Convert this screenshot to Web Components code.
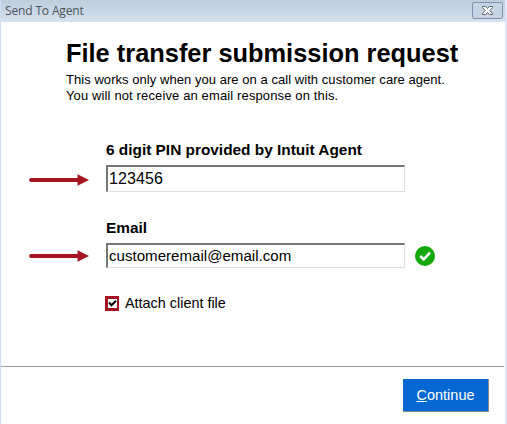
<!DOCTYPE html>
<html lang="en">
<head>
<meta charset="utf-8">
<title>Send To Agent</title>
<style>
  body {
    margin: 0;
    font-family: "Liberation Sans", Arial, sans-serif;
    color: #000;
  }

  .second {
    letter-spacing: 0.13px;
  }
</style>
</head>
<body>
<dialog-window caption="Send To Agent">
  <page-heading>
    File transfer submission request
    <span slot="note">This works only when you are on a call with customer care agent.</span>
    <span slot="note" class="second">You will not receive an email response on this.</span>
  </page-heading>
  <form-field class="pin" label="6 digit PIN provided by Intuit Agent" value="123456"></form-field>
  <form-field class="email" label="Email" value="customeremail@email.com">
    <valid-mark slot="status"></valid-mark>
  </form-field>
  <check-option>Attach client file</check-option>
  <push-button slot="footer"><u>C</u>ontinue</push-button>
</dialog-window>

<script>
class BaseElement extends HTMLElement {
  constructor() {
    super();
    this.attachShadow({ mode: "open" });
  }

  connectedCallback() {
    this.shadowRoot.innerHTML = /* html */`
    <style>${this.constructor.styles}</style>
    ${this.render()}`;
  }
}

class DialogWindow extends BaseElement {
  static get styles() {
    return /* css */`
      :host {
        display: flex;
        flex-direction: column;
        box-sizing: border-box;
        width: 507px;
        height: 424px;
        border-left: 1px solid #cfdff4;
        border-right: 2px solid #dfe6f7;
        background: #fefefe;
        overflow: hidden;
      }

      header {
        display: flex;
        justify-content: space-between;
        align-items: flex-start;
        box-sizing: border-box;
        height: 22px;
        margin: 0 -2px 0 -1px;
        padding: 2px 4px 0 5px;
        background: linear-gradient(#c0cedc, #c9d7e5 50%, #d5e2f0);
        color: #4b535c;
        font: 12px/18px "Open Sans", "Noto Sans", sans-serif;
        letter-spacing: -0.15px;
      }

      svg {
        display: block;
      }

      main {
        flex: 1;
      }

      footer {
        display: flex;
        justify-content: flex-end;
        box-sizing: border-box;
        height: 58px;
        margin-right: 1px;
        padding: 12px 15px 0 0;
        border-top: 1px solid #999;
      }
    `;
  }

  render() {
    return /* html */`
    <header>
      <span>${this.getAttribute("caption")}</span>
      <svg width="31" height="17" viewBox="0 0 31 17">
        <rect x=".5" y=".5" width="30" height="16" rx="1.5" fill="#c7d4e3" stroke="#8390ad"/>
        <path d="M10.5 4.5h3.2l1.8 2 1.8-2h3.2v1.2l-2.7 2.8 2.7 2.8v1.2h-3.2l-1.8-2-1.8 2h-3.2v-1.2l2.7-2.8-2.7-2.8z" fill="#fff" stroke="#5b6270"/>
      </svg>
    </header>
    <main><slot></slot></main>
    <footer><slot name="footer"></slot></footer>`;
  }
}

class PageHeading extends BaseElement {
  static get styles() {
    return /* css */`
      :host {
        display: block;
        height: 119px;
        padding: 15px 0 0 65px;
        box-sizing: border-box;
      }

      h1 {
        margin: 0;
        font-size: 25.4px;
        line-height: 32px;
        white-space: nowrap;
      }

      p {
        display: flex;
        flex-direction: column;
        margin: 3px 0 0;
        font-size: 13px;
        line-height: 16px;
        letter-spacing: 0.05px;
      }
    `;
  }

  render() {
    return /* html */`
    <h1><slot></slot></h1>
    <p><slot name="note"></slot></p>`;
  }
}

class PointerArrow extends BaseElement {
  static get styles() {
    return /* css */`
      :host { display: block; }
      svg { display: block; }
    `;
  }

  render() {
    return /* html */`
    <svg width="61" height="12" viewBox="0 0 61 12">
      <path d="M3 6h48" stroke="#a31621" stroke-width="3.8" stroke-linecap="round"/>
      <path d="M49.5 .2L61 6 49.5 11.8z" fill="#a31621"/>
    </svg>`;
  }
}

class FormField extends BaseElement {
  static get styles() {
    return /* css */`
      :host {
        display: grid;
        grid-template-columns: 61px 299px 20px;
        column-gap: 17px;
        align-items: center;
        align-content: start;
        padding-left: 27px;
        --box-height: 27px;
      }

      :host(.pin) {
        height: 78px;
      }

      :host(.email) {
        --box-height: 25px;
        height: 74px;
      }

      label {
        grid-column: 2 / 4;
        height: 24px;
        font-size: 15.4px;
        font-weight: bold;
        line-height: 18px;
        white-space: nowrap;
      }

      pointer-arrow {
        grid-column: 1;
      }

      :host(.pin) pointer-arrow {
        padding-top: 2px;
      }

      .box {
        box-sizing: border-box;
        height: var(--box-height);
        padding-left: 1px;
        border: solid;
        border-width: 2px 1px 1px 2px;
        border-color: #777 #ddd #ddd #777;
        background: #fff;
        font-size: 15.1px;
        line-height: calc(var(--box-height) - 3px);
      }

      :host(.pin) .box {
        font-size: 16px;
        letter-spacing: 0.1px;
      }

      ::slotted(*) {
        margin-left: -7px;
      }
    `;
  }

  render() {
    return /* html */`
    <label>${this.getAttribute("label")}</label>
    <pointer-arrow></pointer-arrow>
    <div class="box">${this.getAttribute("value")}</div>
    <slot name="status"></slot>`;
  }
}

class ValidMark extends BaseElement {
  static get styles() {
    return /* css */`
      :host { display: block; }
      svg { display: block; }
    `;
  }

  render() {
    return /* html */`
    <svg width="20" height="20" viewBox="0 0 20 20">
      <circle cx="10" cy="10" r="10" fill="#13a80b"/>
      <path d="M5.2 10l3.5 3.4 6.3-6.8" fill="none" stroke="#fff" stroke-width="2.5"/>
    </svg>`;
  }
}

class CheckOption extends BaseElement {
  static get styles() {
    return /* css */`
      :host {
        display: flex;
        align-items: center;
        gap: 6px;
        padding-left: 104px;
        font-size: 14.4px;
        line-height: 20px;
      }
      svg { display: block; }
    `;
  }

  render() {
    return /* html */`
    <svg width="14" height="15" viewBox="0 0 14 15">
      <path d="M0 0h14v15H0z" fill="#a31621"/>
      <path d="M3 3h9v9H3z" fill="#fff"/>
      <path d="M4 6.5l2.5 2.7L11 4.8" fill="none" stroke="#000" stroke-width="2"/>
    </svg>
    <span><slot></slot></span>`;
  }
}

class PushButton extends BaseElement {
  static get styles() {
    return /* css */`
      :host {
        display: block;
        box-sizing: border-box;
        width: 86px;
        height: 33px;
        border-right: 1px solid #8a8a8a;
        border-bottom: 1px solid #8a8a8a;
        background: #0567d1;
        color: #fff;
        font-size: 14.5px;
        line-height: 32px;
        text-align: center;
      }
    `;
  }

  render() {
    return "<slot></slot>";
  }
}

customElements.define("dialog-window", DialogWindow);
customElements.define("page-heading", PageHeading);
customElements.define("pointer-arrow", PointerArrow);
customElements.define("form-field", FormField);
customElements.define("valid-mark", ValidMark);
customElements.define("check-option", CheckOption);
customElements.define("push-button", PushButton);
</script>
</body>
</html>
